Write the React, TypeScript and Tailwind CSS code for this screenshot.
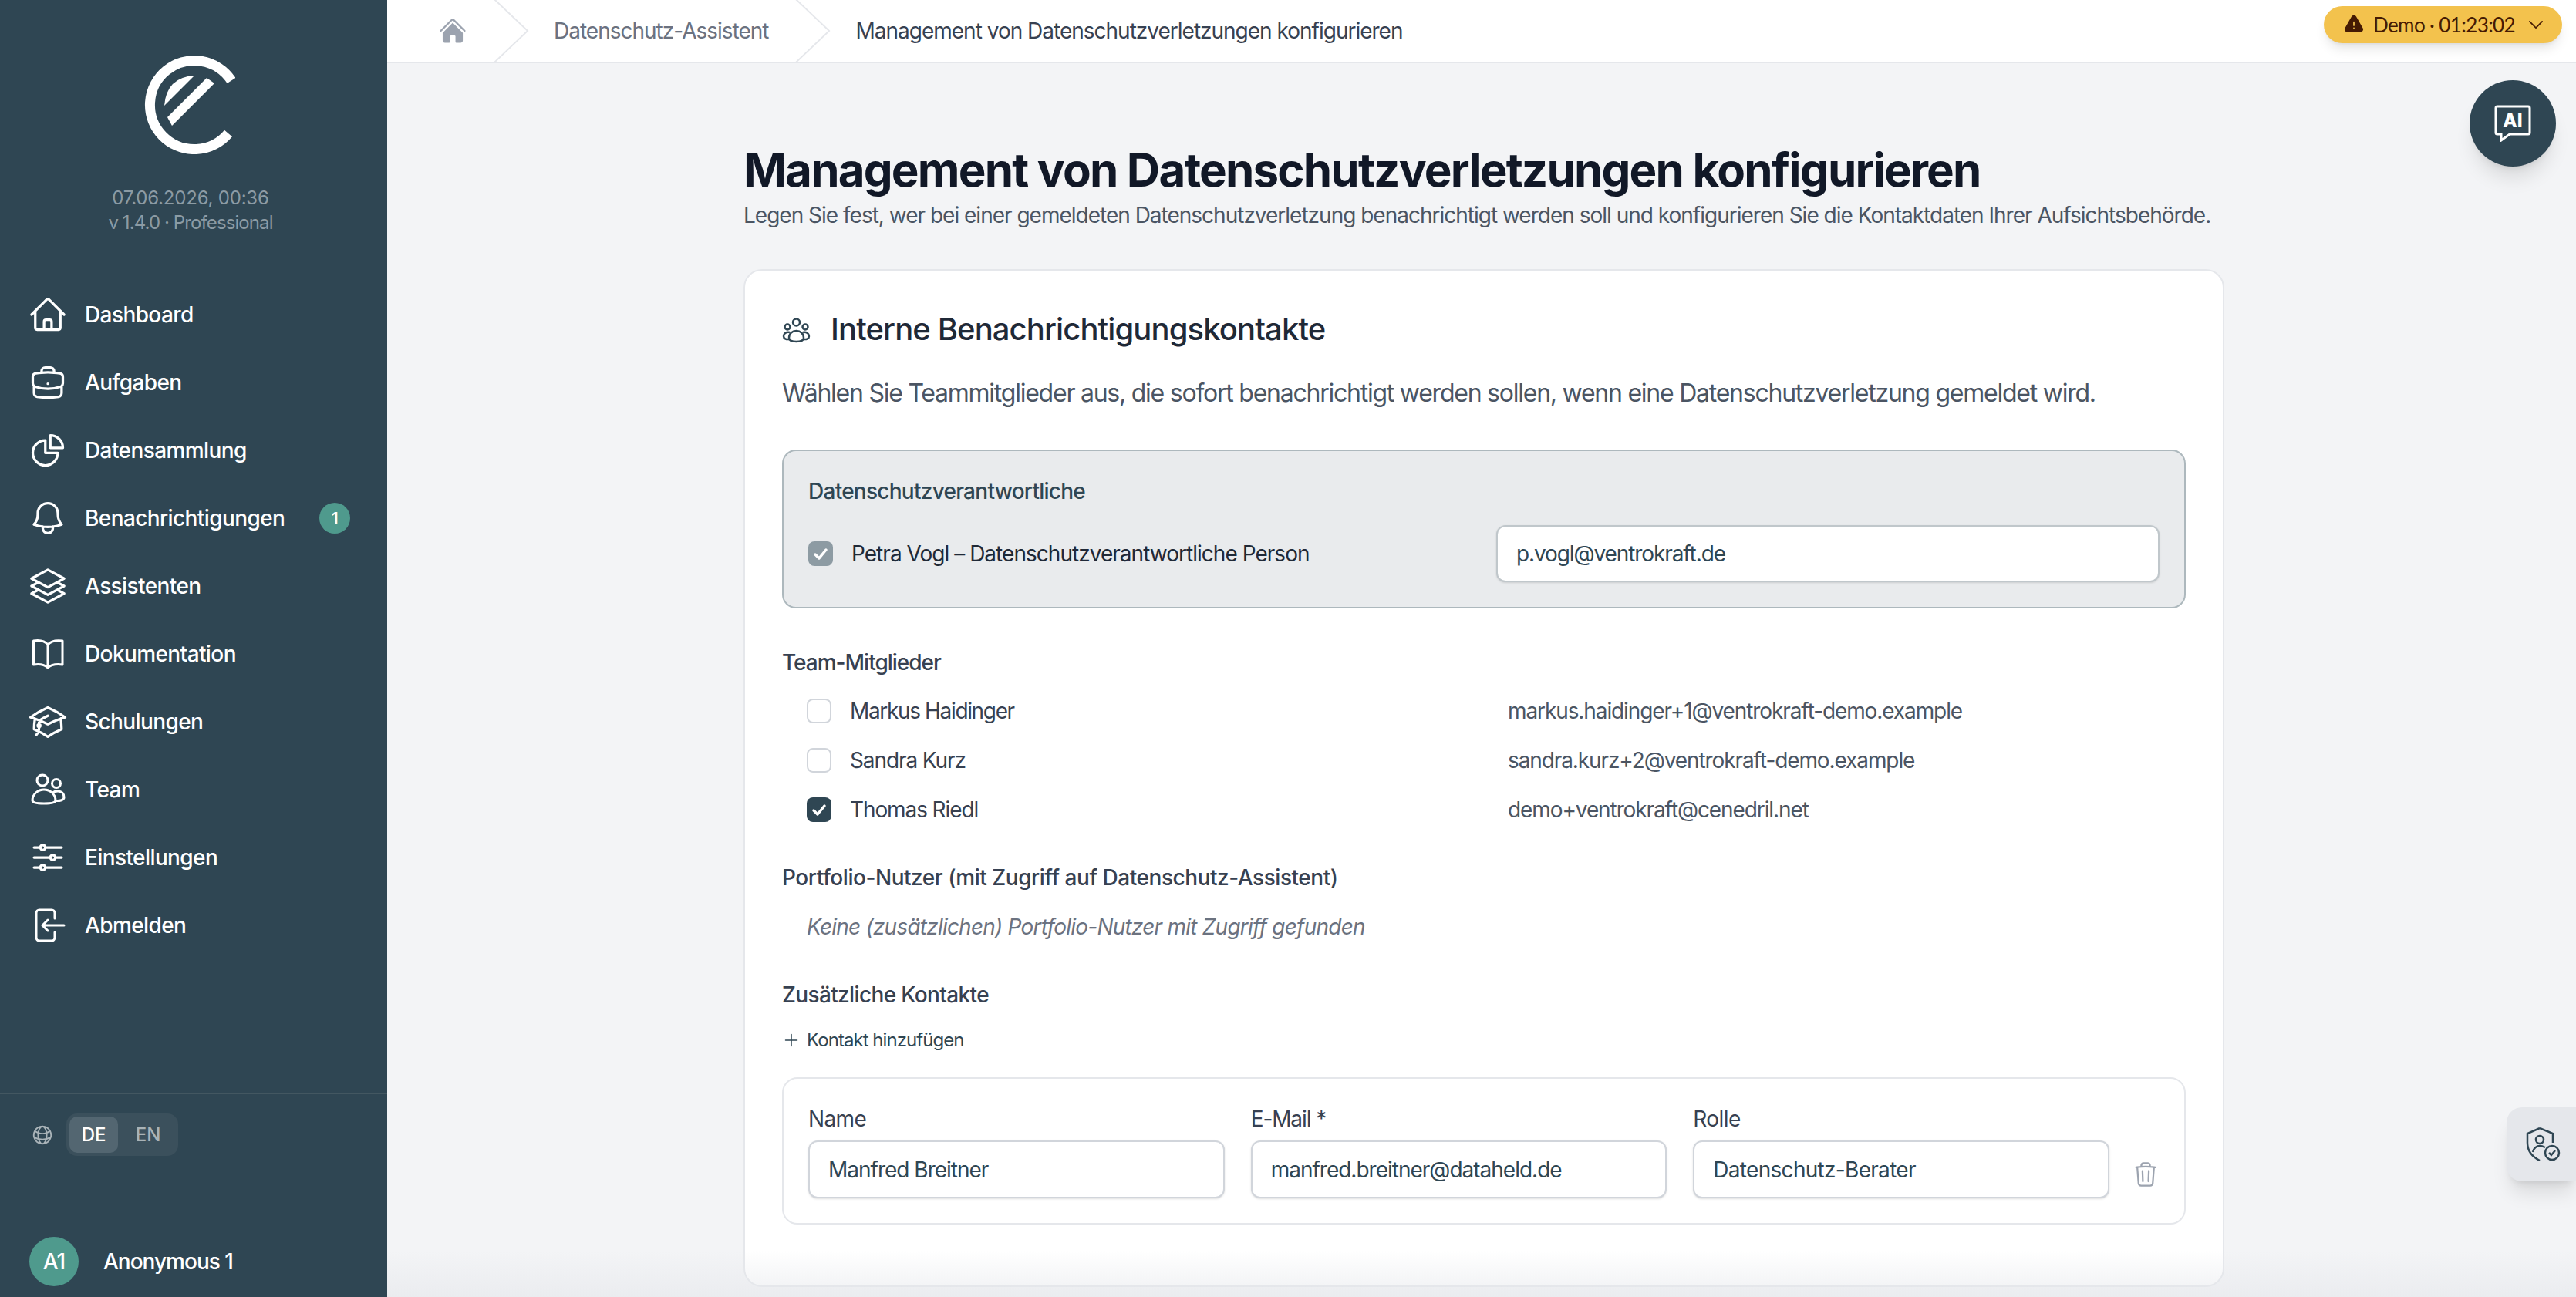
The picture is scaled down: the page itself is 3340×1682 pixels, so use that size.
import {
    HiOutlineHome,
    HiOutlineBriefcase,
    HiOutlineChartPie,
    HiOutlineBell,
    HiOutlineSquare3Stack3D,
    HiOutlineAcademicCap,
    HiOutlineAdjustmentsHorizontal,
    HiOutlineGlobeAlt,
    HiOutlineTrash,
    HiOutlinePlus,
    HiOutlineChevronDown,
    HiHome,
    HiExclamationTriangle,
} from "react-icons/hi2"

function BookIcon({className}: {className?: string}) {
    return (
        <svg viewBox="0 0 52 52" fill="none" stroke="currentColor" strokeWidth="3" strokeLinejoin="round" className={className}>
            <path d="M26 14C22 9 14 8 7.5 9v31c7.500-1 14.500 0 18.500 4 4-4 11-5 19-4V9c-8-1-15 0-19 5v30"/>
        </svg>
    )
}

function TeamIcon({className}: {className?: string}) {
    return (
        <svg viewBox="0 0 52 52" fill="none" stroke="currentColor" strokeWidth="3" className={className}>
            <circle cx="19" cy="14" r="7"/>
            <circle cx="37" cy="18" r="5.500"/>
            <path d="M6 40c0-8 7-14 15-14s15 6 15 14c0 3-7 4-15 4S6 43 6 40z"/>
            <path d="M32 30c2-1.500 4-2 7-2 5 0 8 3 8 8 0 3.500-5 5-11.500 4.500"/>
        </svg>
    )
}

function LogoutIcon({className}: {className?: string}) {
    return (
        <svg viewBox="0 0 52 52" fill="none" stroke="currentColor" strokeWidth="3" strokeLinecap="round"
             strokeLinejoin="round" className={className}>
            <path d="M35 17v-7a4 4 0 0 0-4-4H15a4 4 0 0 0-4 4v32a4 4 0 0 0 4 4h16a4 4 0 0 0 4-4v-7"/>
            <path d="M47 26H19M26 19l-7 7 7 7"/>
        </svg>
    )
}

function Check({className}: {className?: string}) {
    return (
        <svg viewBox="0 0 32 32" fill="none" stroke="currentColor" strokeWidth="3.500" strokeLinecap="round"
             strokeLinejoin="round" className={className}>
            <path d="M9 17l5 5 9-11"/>
        </svg>
    )
}

export default function App() {
    const nav = [
        {label: 'Dashboard', icon: HiOutlineHome},
        {label: 'Aufgaben', icon: HiOutlineBriefcase},
        {label: 'Datensammlung', icon: HiOutlineChartPie},
        {label: 'Benachrichtigungen', icon: HiOutlineBell, badge: 1},
        {label: 'Assistenten', icon: HiOutlineSquare3Stack3D},
        {label: 'Dokumentation', icon: BookIcon},
        {label: 'Schulungen', icon: HiOutlineAcademicCap},
        {label: 'Team', icon: TeamIcon},
        {label: 'Einstellungen', icon: HiOutlineAdjustmentsHorizontal},
        {label: 'Abmelden', icon: LogoutIcon},
    ]

    const team = [
        {name: 'Markus Haidinger', email: 'markus.haidinger+1@ventrokraft-demo.example', checked: false, track: 'tracking-[-1.35px]'},
        {name: 'Sandra Kurz', email: 'sandra.kurz+2@ventrokraft-demo.example', checked: false, track: 'tracking-[-1.1px]'},
        {name: 'Thomas Riedl', email: 'demo+ventrokraft@cenedril.net', checked: true, track: 'tracking-[-1.1px]'},
    ]

    const contact = [
        {label: 'Name', value: 'Manfred Breitner', labelTrack: 'tracking-[-0.6px]', track: 'tracking-[-1px]'},
        {label: 'E-Mail *', value: 'manfred.breitner@dataheld.de', labelTrack: 'tracking-[-1.1px]', track: 'tracking-[-1px]'},
        {label: 'Rolle', value: 'Datenschutz-Berater', labelTrack: 'tracking-[-0.6px]', track: 'tracking-[-0.7px]'},
    ]

    return (
        <div className="relative flex h-[1682px] w-[3340px] overflow-hidden bg-[#f3f4f6] [font-family:Inter,sans-serif]">
            <aside className="flex w-[502px] shrink-0 flex-col bg-[#2f4653] text-white">
                <div className="flex flex-col items-center pt-[72px]">
                    <svg viewBox="187 72 118 128" className="ml-[-10px] h-[128px] w-[118px]">
                        <path d="M300 104.500A57.500 57.500 0 1 0 296 173" fill="none" stroke="white" strokeWidth="13"/>
                        <path d="M268 101l10 7-55 55-6-11z" fill="white"/>
                        <path d="M252 98Q216 100 213 137z" fill="white"/>
                    </svg>
                    <div className="mt-[41px] ml-[-8px] text-center text-[24px] leading-[32px] text-[#8c9ba4]">
                        <div className="tracking-[-0.2px]">07.06.2026, 00:36</div>
                        <div className="tracking-[-0.9px]">v 1.4.0 · Professional</div>
                    </div>
                </div>

                <nav className="mt-[59px] flex flex-col">
                    {nav.map((item, index) => (
                        <a key={index} className="flex h-[88px] items-center gap-[22px] pl-[36px] text-[28px] font-medium tracking-[-0.6px]">
                            <item.icon className="h-[52px] w-[52px] shrink-0"/>
                            <span>{item.label}</span>
                            {item.badge && (
                                <span className="absolute left-[414px] flex h-[40px] w-[40px] items-center justify-center rounded-full bg-[#4f9a8d] text-[22px]">
                                    {item.badge}
                                </span>
                            )}
                        </a>
                    ))}
                </nav>

                <div className="mt-auto border-t-2 border-[#435761] pt-[25px]">
                    <div className="flex items-center gap-[16px] pl-[40px]">
                        <HiOutlineGlobeAlt className="h-[30px] w-[30px] text-[#a9b3b8]"/>
                        <div className="flex h-[55px] w-[145px] items-center rounded-[14px] bg-[#3b505c] p-[4px] text-[24px] font-medium">
                            <span className="flex h-[47px] w-[65px] items-center justify-center rounded-[10px] bg-[#536671]">DE</span>
                            <span className="ml-[4px] flex h-[47px] w-[72px] items-center justify-center text-[#a9b3b8]">EN</span>
                        </div>
                    </div>
                    <div className="mt-[105px] mb-[14px] flex items-center gap-[32px] pl-[38px] text-[28px] font-medium tracking-[-1px]">
                        <span className="flex h-[64px] w-[64px] items-center justify-center rounded-full bg-[#4f9a8d]">A1</span>
                        <span>Anonymous 1</span>
                    </div>
                </div>
            </aside>

            <main className="relative flex-1">
                <header className="flex h-[82px] items-center border-b-2 border-[#e5e7eb] bg-white text-[28px] tracking-[-1px]">
                    <HiHome className="ml-[66px] h-[38px] w-[38px] text-[#9ca3af]"/>
                    <svg viewBox="0 0 24 44" preserveAspectRatio="none" className="ml-[34px] h-full w-[46px] text-[#e5e7eb]" fill="currentColor">
                        <path d="M.293 0l22 22-22 22h1.414l22-22-22-22H.293z"/>
                    </svg>
                    <span className="ml-[32px] text-[#6b7280]">Datenschutz-Assistent</span>
                    <svg viewBox="0 0 24 44" preserveAspectRatio="none" className="ml-[35px] h-full w-[46px] text-[#e5e7eb]" fill="currentColor">
                        <path d="M.293 0l22 22-22 22h1.414l22-22-22-22H.293z"/>
                    </svg>
                    <span className="ml-[32px] text-[#374151]">Management von Datenschutzverletzungen konfigurieren</span>
                    <div className="absolute top-[8px] right-[18px] flex h-[48px] w-[309px] items-center rounded-full bg-[#f3c24d] pl-[25px] text-[26px] tracking-[-0.6px] text-[#451a03] shadow-lg [font-family:Lato,sans-serif]">
                        <HiExclamationTriangle className="h-[28px] w-[28px]"/>
                        <span className="ml-[11px]">Demo · 01:23:02</span>
                        <HiOutlineChevronDown className="ml-[14px] h-[26px] w-[26px]"/>
                    </div>
                </header>

                <div className="absolute top-[104px] right-[26px] flex h-[112px] w-[112px] items-center justify-center rounded-full bg-[#2f4653] text-white shadow-xl">
                    <svg viewBox="0 0 48 48" fill="none" className="h-[48px] w-[48px]">
                        <path d="M4 2h40a2 2 0 0 1 2 2v32a2 2 0 0 1-2 2H20l-11 8v-8H4a2 2 0 0 1-2-2V4a2 2 0 0 1 2-2z" stroke="currentColor" strokeWidth="3"/>
                        <text x="24" y="29" textAnchor="middle" fontSize="24" fontWeight="800" fill="currentColor" fontFamily="Inter, sans-serif">AI</text>
                    </svg>
                </div>

                <div className="absolute top-[1436px] right-0 flex h-[96px] w-[90px] items-center rounded-l-[20px] bg-[#e5e7eb] pl-[24px] text-[#2f4653] shadow-xl">
                    <svg viewBox="0 0 46 44" fill="none" stroke="currentColor" strokeWidth="2.500" className="h-[44px] w-[46px]">
                        <path d="M19 1l17 7v12M19 1L3 8v12c0 10 6 18 16 23"/>
                        <circle cx="19" cy="16" r="5"/>
                        <path d="M10 32c1-5 5-8 9-8 3 0 5 1 7 2"/>
                        <circle cx="35" cy="33" r="9"/>
                        <path d="M31 33l3 3 5-6"/>
                    </svg>
                </div>

                <div className="ml-[462px] w-[1920px] pt-[102px]">
                    <h1 className="text-[60px] leading-[72px] font-bold tracking-[-1.8px] text-[#111827]">Management von Datenschutzverletzungen konfigurieren</h1>
                    <p className="mt-[3px] text-[28px] leading-[40px] tracking-[-1px] text-[#4b5563]">Legen Sie fest, wer bei einer gemeldeten Datenschutzverletzung benachrichtigt werden soll und konfigurieren Sie die Kontaktdaten Ihrer Aufsichtsbehörde.</p>

                    <section className="mt-[50px] rounded-[24px] border-2 border-[#e5e7eb] bg-white px-[48px] pt-[48px] pb-[79px]">
                        <h2 className="flex items-center gap-[25px] text-[40px] leading-[56px] font-medium tracking-[-0.9px] text-[#1f2937]">
                            <svg viewBox="10 9 38 35" fill="none" stroke="#2f4653" strokeWidth="2.500" className="h-[35px] w-[38px]">
                                <circle cx="28.500" cy="17" r="4.500"/>
                                <circle cx="17" cy="23" r="3.500"/>
                                <circle cx="40" cy="23" r="3.500"/>
                                <path d="M19 37c0-5 4-9 9.500-9S38 32 38 37c0 3.500-4 5-9.500 5S19 40.500 19 37z"/>
                                <path d="M20 30c-5-1-8 2-8 5 0 3 3 4.500 7.500 4M37 30c5-1 8 2 8 5 0 3-3 4.500-7.500 4"/>
                            </svg>
                            Interne Benachrichtigungskontakte
                        </h2>
                        <p className="mt-[31px] text-[32px] leading-[48px] tracking-[-1.24px] text-[#4b5563]">Wählen Sie Teammitglieder aus, die sofort benachrichtigt werden sollen, wenn eine Datenschutzverletzung gemeldet wird.</p>

                        <div className="mt-[49px] rounded-[18px] border-2 border-[#adb8bd] bg-[#e9ebed] p-[32px]">
                            <h3 className="text-[28px] leading-[40px] font-medium tracking-[-0.74px] text-[#2f4653]">Datenschutzverantwortliche</h3>
                            <div className="mt-[24px] grid grid-cols-[892px_1fr] items-center">
                                <div className="flex items-center gap-[24px] text-[28px] tracking-[-0.97px] text-[#1f2937]">
                                    <span className="flex h-[32px] w-[32px] items-center justify-center rounded-[8px] bg-[#8d9ba3] text-white">
                                        <Check className="h-[32px] w-[32px]"/>
                                    </span>
                                    Petra Vogl – Datenschutzverantwortliche Person
                                </div>
                                <input readOnly defaultValue="p.vogl@ventrokraft.de"
                                       className="h-[74px] rounded-[12px] border-2 border-[#c0c7cb] bg-white px-[24px] text-[28px] tracking-[-1.1px] text-[#2f4653] shadow-sm"/>
                            </div>
                        </div>

                        <h3 className="mt-[50px] text-[28px] leading-[40px] font-medium tracking-[-1px] text-[#374151]">Team-Mitglieder</h3>
                        <div className="mt-[22px] flex flex-col gap-[24px] pl-[32px]">
                            {team.map((member, index) => (
                                <div key={index} className="grid h-[40px] grid-cols-[909px_1fr] items-center text-[28px] tracking-[-1.1px]">
                                    <div className={`flex items-center gap-[24px] text-[#374151] ${member.track}`}>
                                        {member.checked ? (
                                            <span className="flex h-[32px] w-[32px] items-center justify-center rounded-[8px] bg-[#2f4653] text-white">
                                                <Check className="h-[32px] w-[32px]"/>
                                            </span>
                                        ) : (
                                            <span className="h-[32px] w-[32px] rounded-[8px] border-2 border-[#d1d5db] bg-white"/>
                                        )}
                                        {member.name}
                                    </div>
                                    <span className="text-[#4b5563]">{member.email}</span>
                                </div>
                            ))}
                        </div>

                        <h3 className="mt-[49px] text-[28px] leading-[40px] font-medium tracking-[-0.46px] text-[#374151]">Portfolio-Nutzer (mit Zugriff auf Datenschutz-Assistent)</h3>
                        <p className="mt-[24px] pl-[32px] text-[28px] leading-[40px] tracking-[-0.78px] text-[#6b7280] italic">Keine (zusätzlichen) Portfolio-Nutzer mit Zugriff gefunden</p>

                        <h3 className="mt-[48px] text-[28px] leading-[40px] font-medium tracking-[-0.64px] text-[#374151]">Zusätzliche Kontakte</h3>
                        <button className="mt-[23px] flex h-[32px] items-center gap-[8px] text-[24px] tracking-[-0.95px] text-[#2f4653]">
                            <HiOutlinePlus className="h-[24px] w-[24px]"/>
                            Kontakt hinzufügen
                        </button>

                        <div className="mt-[32px] flex items-end gap-[34px] rounded-[20px] border-2 border-[#e5e7eb] p-[32px]">
                            {contact.map((field, index) => (
                                <label key={index} className={`block w-[540px] text-[28px] leading-[40px] text-[#374151] ${field.labelTrack}`}>
                                    {field.label}
                                    <input readOnly defaultValue={field.value}
                                           className={`mt-[8px] block h-[75px] w-full rounded-[12px] border-2 border-[#d1d5db] bg-white px-[24px] text-[#2f4653] shadow-sm ${field.track}`}/>
                                </label>
                            ))}
                            <HiOutlineTrash className="mb-[13px] -ml-[5px] h-[36px] w-[36px] shrink-0 text-[#9ca3af]"/>
                        </div>
                    </section>
                </div>

                <div className="absolute right-0 bottom-0 left-0 h-[60px] bg-gradient-to-b from-transparent to-[#e5e7eb]/60"/>
            </main>
        </div>
    )
}
